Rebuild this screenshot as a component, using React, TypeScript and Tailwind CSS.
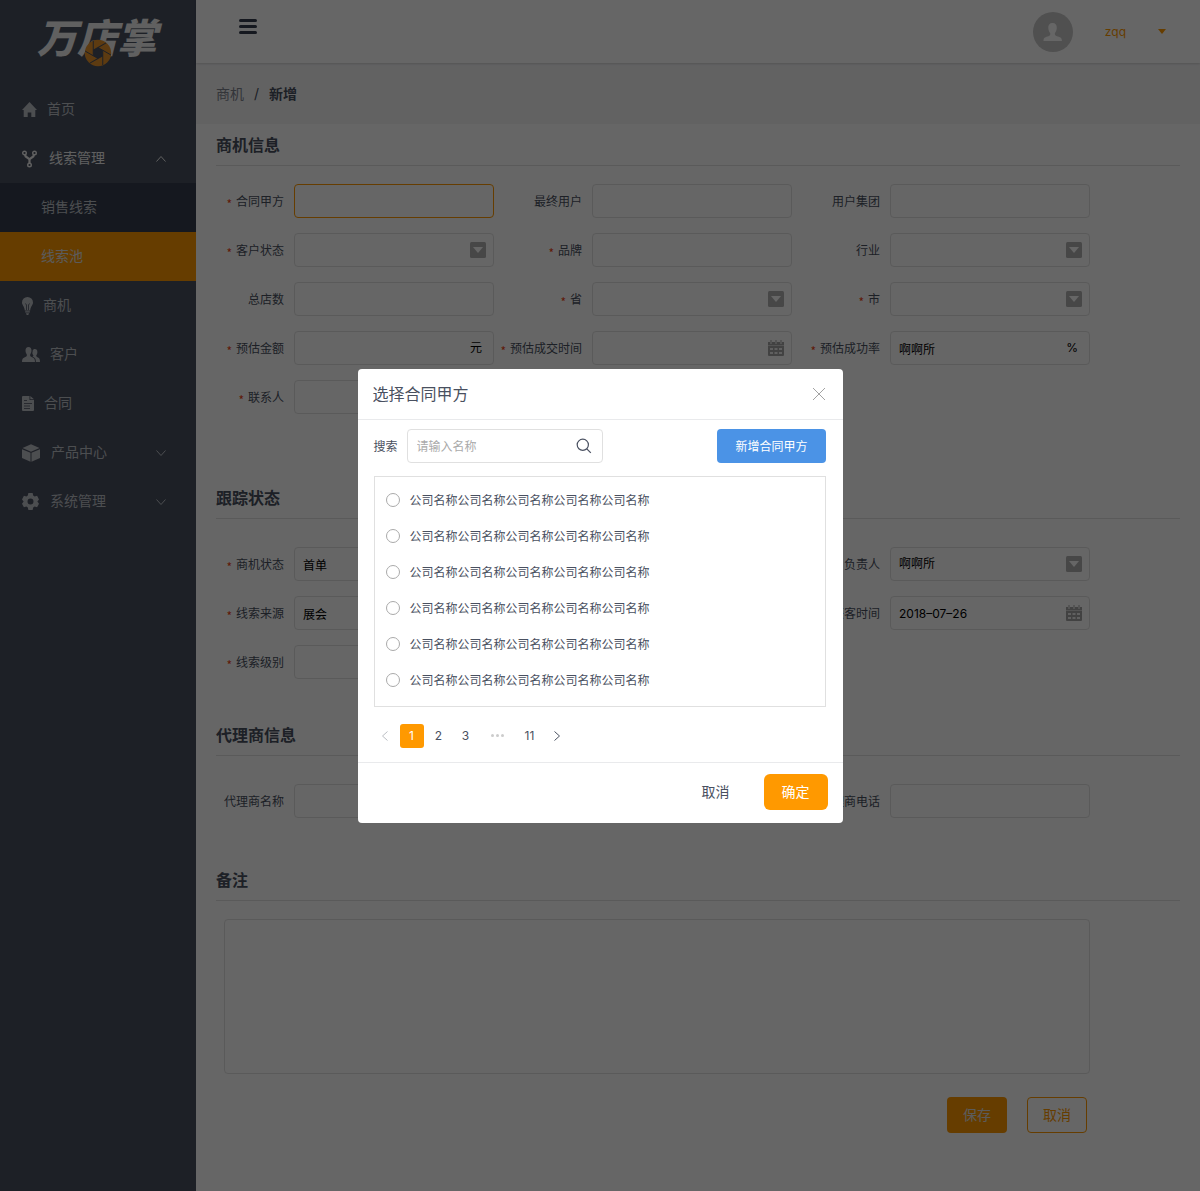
import React, { useId } from "react";

const Chevron = ({ d, className }: { d: string; className: string }) => (
  <svg viewBox="0 0 10 10" className={className} fill="none" stroke="currentColor">
    <path d={d} />
  </svg>
);
const UP = "M0.5 7.5 5 2.5 9.5 7.5";
const DOWN = "M0.5 2.5 5 7.5 9.5 2.5";
const LEFT = "M7.5 0.5 2.5 5 7.5 9.5";
const RIGHT = "M2.5 0.5 7.5 5 2.5 9.5";

const HomeIcon = () => (
  <svg viewBox="0 0 15 15" className="h-[15px] w-[15px]" fill="currentColor">
    <path d="M7.5 0 15 8h-1.700V15H9.300V10.500H5.700V15H1.700V8H0z" />
  </svg>
);
const ForkIcon = () => (
  <svg viewBox="0 0 15 18" className="h-[18px] w-[15px]" fill="none" stroke="currentColor">
    <circle cx="2.500" cy="3" r="1.800" strokeWidth="1.400" />
    <circle cx="12.500" cy="3" r="1.800" strokeWidth="1.400" />
    <circle cx="7.500" cy="15" r="1.800" strokeWidth="1.400" />
    <path d="M3 5c.500 3 4.500 2.500 4.500 5v3M12 5c-.500 3-4.500 2.500-4.500 5" strokeWidth="2.200" />
  </svg>
);
const BulbIcon = () => (
  <svg viewBox="0 0 11 18" className="h-[18px] w-[11px]">
    <path fill="currentColor" d="M5.500 0A5.500 5.500 0 0 0 0 5.500C0 8 2.500 9.500 2.800 13.500h5.400C8.500 9.500 11 8 11 5.500A5.500 5.500 0 0 0 5.500 0zM3.200 14.200h4.600v1.300H3.200zM4 16.200h3L6.300 18H4.700z" />
    <path d="M4.500 13V8L3.500 6.500M6.500 13V8l1-1.500" className="stroke-[#495060]" fill="none" strokeWidth=".8" />
  </svg>
);
const PeopleIcon = () => (
  <svg viewBox="0 0 18 15" className="h-[15px] w-[18px]" fill="currentColor">
    <path d="M6.500 0C8.500 0 9.600 1.500 9.500 3.800 9.400 5.800 8.700 6.800 8.200 7.500c-.3 1.500.3 2 2 2.700C12.300 11 13 12 13 15H0c0-3 .7-4 2.800-4.800 1.700-.7 2.300-1.200 2-2.700C4.300 6.800 3.600 5.800 3.500 3.800 3.400 1.500 4.500 0 6.500 0z" />
    <path d="M12.800 2c1.700 0 2.700 1.200 2.600 3.200-.1 1.600-.6 2.500-1.100 3.100-.2 1.200.3 1.700 1.600 2.200C17.500 11.200 18 12 18 15h-4.100c0-3-.8-4.300-3.400-5.400.9-.4 1-.7.8-1.300-.6-.7-.9-1.500-1-2.300.3-.7.4-1.500.4-2.500.4-1 1.100-1.500 2.100-1.500z" />
  </svg>
);
const DocIcon = () => (
  <svg viewBox="0 0 12 15" className="h-[15px] w-[12px]">
    <path fill="currentColor" d="M1 0h6.500v4H12v10a1 1 0 0 1-1 1H1a1 1 0 0 1-1-1V1a1 1 0 0 1 1-1zM8.300 0 12 3.300H8.300z" />
    <path className="stroke-[#495060]" strokeWidth=".8" d="M2 4.500h3M2 7.500h8M2 10h6M2 12.500h6" />
  </svg>
);
const BoxIcon = () => (
  <svg viewBox="0 0 18 18" className="h-[18px] w-[18px]" fill="currentColor">
    <path d="M9 .3 17.500 4 9 7.800.5 4zM0 5.200l8.500 3.600v8.900L0 14zM18 5.200 9.500 8.800v8.900L18 14z" />
  </svg>
);
const GearIcon = () => (
  <svg viewBox="0 0 24 24" className="h-[17px] w-[17px]" fill="currentColor">
    <path fillRule="evenodd" d="M9 0h6l.8 3.600 2 1.200L21.300 4l2.700 5-2.300 3 2.300 3-2.700 5-3.500-.8-2 1.200L15 24H9l-.8-3.600-2-1.200-3.500.8L0 15l2.300-3L0 9l2.700-5 3.500.8 2-1.200zM12 7.800a4.200 4.200 0 1 0 0 8.400 4.200 4.200 0 0 0 0-8.400z" />
  </svg>
);
const CalendarIcon = () => (
  <svg viewBox="0 0 16 16" className="h-4 w-4" aria-hidden="true">
    <path fill="#a6a6a6" d="M0 2h2v1.500h2V2h3v1.500h2V2h3v1.500h2V2h2v3H0zM2.500 0h1v3h-1zM7.500 0h1v3h-1zM12.500 0h1v3h-1zM0 5.500h16V15a1 1 0 0 1-1 1H1a1 1 0 0 1-1-1z" />
    <path fill="#f0f0f0" d="M2 8h3v2H2zM6.500 8h3v2h-3zM11 8h3v2h-3zM2 12h3v2H2zM6.500 12h3v2h-3zM11 12h3v2h-3z" />
  </svg>
);
const SelectIcon = () => (
  <svg viewBox="0 0 16 16" className="h-4 w-4" aria-hidden="true">
    <rect width="16" height="16" rx="1.500" fill="#b2b2b2" />
    <path d="M3 5h10l-5 6z" fill="#fff" />
  </svg>
);
const Aperture = () => (
  <svg viewBox="-14 -14 28 28" className="absolute left-[47px] top-[22px] h-7 w-7" aria-hidden="true">
    <circle r="13.200" fill="#e8942c" />
    <path fill="#495060" d="M0-5.500 4.760-2.750V2.750L0 5.500-4.760 2.750V-2.750z" />
    <g stroke="#495060" strokeWidth="1">
      <path d="M0-5.500 12.860 1.930" />
      <path d="M0-5.500 12.860 1.930" transform="rotate(60)" />
      <path d="M0-5.500 12.860 1.930" transform="rotate(120)" />
      <path d="M0-5.500 12.860 1.930" transform="rotate(180)" />
      <path d="M0-5.500 12.860 1.930" transform="rotate(240)" />
      <path d="M0-5.500 12.860 1.930" transform="rotate(300)" />
    </g>
  </svg>
);

type Item = { label: string; icon: React.ReactNode; gap: string; arrow?: string; open?: boolean };
const topItems: Item[] = [
  { label: "首页", icon: <HomeIcon />, gap: "gap-[10px]" },
  { label: "线索管理", icon: <ForkIcon />, gap: "gap-3", arrow: UP, open: true },
];
const bottomItems: Item[] = [
  { label: "商机", icon: <BulbIcon />, gap: "gap-[10px]" },
  { label: "客户", icon: <PeopleIcon />, gap: "gap-[10px]" },
  { label: "合同", icon: <DocIcon />, gap: "gap-[10px]" },
  { label: "产品中心", icon: <BoxIcon />, gap: "gap-[11px]", arrow: DOWN },
  { label: "系统管理", icon: <GearIcon />, gap: "gap-[11px]", arrow: DOWN },
];

const NavItem = ({ item }: { item: Item }) => (
  <a
    href="#"
    className={`flex h-[49px] items-center pl-[22px] pr-[30px] ${item.gap} ${item.open ? "text-[#f0f0f0]" : "text-[#bfc2c8]"}`}
  >
    {item.icon}
    <span className="flex-1 pb-[2px]">{item.label}</span>
    {item.arrow && <Chevron d={item.arrow} className="h-[10px] w-[10px]" />}
  </a>
);

const Sidebar = () => (
  <aside className="w-[196px] shrink-0 bg-[#495060] text-sm">
    <div className="h-[85px] pl-[37px] pt-[17px]">
      <div className="relative w-fit whitespace-nowrap text-[40px] font-black italic leading-[44px] text-[#f0f0f0]">
        万店掌
        <Aperture />
      </div>
    </div>
    <nav>
      {topItems.map((i) => (
        <NavItem key={i.label} item={i} />
      ))}
      <a href="#" className="flex h-[49px] items-center bg-[#363e4f] pb-[2px] pl-[41px] text-[#bfc2c8]">
        销售线索
      </a>
      <a href="#" className="flex h-[49px] items-center bg-[#ff9900] pb-[2px] pl-[41px] text-[#e4e4e4]">
        线索池
      </a>
      {bottomItems.map((i) => (
        <NavItem key={i.label} item={i} />
      ))}
    </nav>
  </aside>
);

type FieldProps = {
  label: string;
  required?: boolean;
  kind?: "text" | "select" | "date";
  value?: string;
  suffix?: string;
  active?: boolean;
  className?: string;
};

const Field = ({ label, required, kind = "text", value = "", suffix, active, className = "" }: FieldProps) => {
  const id = useId();
  const box = `h-[34px] w-full appearance-none rounded-[4px] border bg-white pl-2 pr-8 text-xs text-black outline-none ${
    active ? "border-[#ff9900]" : "border-[#e0e0e0]"
  }`;
  return (
    <div className={`flex items-center ${className}`}>
      <label htmlFor={id} className="flex w-[88px] shrink-0 items-center justify-end gap-1 whitespace-nowrap font-['Noto_Sans_CJK_SC',sans-serif] text-xs">
        {required && <span className="pt-[6px] text-[#ed3f14]">*</span>}
        {label}
      </label>
      <div className="relative ml-[10px] flex-1">
        {kind === "select" ? (
          <select id={id} className={box} defaultValue={value}>
            <option>{value}</option>
          </select>
        ) : (
          <input id={id} type="text" className={box} defaultValue={value} />
        )}
        <span className="pointer-events-none absolute inset-y-0 right-2 flex items-center text-xs text-black">
          {kind === "select" && <SelectIcon />}
          {kind === "date" && <CalendarIcon />}
          {suffix && <span className="pr-1">{suffix}</span>}
        </span>
      </div>
    </div>
  );
};

const Section = ({ title, children, className = "" }: { title: string; children: React.ReactNode; className?: string }) => (
  <section>
    <h2 className="mx-5 flex h-[42px] items-center border-b border-[#e0e0e0] text-base font-bold">{title}</h2>
    <div className={`pr-[110px] ${className}`}>{children}</div>
  </section>
);

const GRID = "grid grid-cols-3 gap-y-[15px]";

const Modal = () => (
  <div className="fixed inset-0 z-10 flex items-center justify-center bg-black/60">
    <div role="dialog" aria-label="选择合同甲方" className="w-[485px] rounded-[4px] bg-white">
      <header className="flex h-[51px] items-center justify-between border-b border-[#e9eaec] pl-[15px] pr-[18px]">
        <h3 className="text-base">选择合同甲方</h3>
        <button aria-label="关闭">
          <svg viewBox="0 0 12 12" className="h-3 w-3 stroke-[#999]">
            <path d="M0 0 12 12M12 0 0 12" strokeWidth=".9" />
          </svg>
        </button>
      </header>
      <div className="pb-[14px] pl-4 pr-[17px] pt-[9px]">
        <div className="flex items-center font-['Noto_Sans_CJK_SC',sans-serif] text-xs">
          <label htmlFor="search">搜索</label>
          <div className="relative ml-[9px] w-[196px]">
            <input
              id="search"
              placeholder="请输入名称"
              className="h-[34px] w-full rounded-[4px] border border-[#e0e0e0] pl-[9px] pr-8 outline-none placeholder:text-[#aaa]"
            />
            <svg viewBox="0 0 16 16" className="absolute right-[11px] top-[9px] h-4 w-4" fill="none" stroke="#495060" strokeWidth="1.200">
              <circle cx="6.800" cy="6.800" r="5.600" />
              <path d="m10.800 10.800 4 4" />
            </svg>
          </div>
          <button className="ml-auto h-[34px] rounded-[4px] bg-[#4b93e6] px-[18px] text-white">新增合同甲方</button>
        </div>
        <ul className="mt-[13px] flex flex-col gap-[18px] border border-[#e0e0e0] pb-[17px] pl-[11px] pt-[14px] font-['Noto_Sans_CJK_SC',sans-serif] text-xs">
          {[1, 2, 3, 4, 5, 6].map((n) => (
            <li key={n}>
              <label className="flex h-[18px] items-center gap-[10px]">
                <input type="radio" name="company" className="h-[14px] w-[14px] appearance-none rounded-full border border-[#aaa]" />
                公司名称公司名称公司名称公司名称公司名称
              </label>
            </li>
          ))}
        </ul>
        <nav className="mt-[17px] flex h-6 items-center text-xs">
          <button aria-label="上一页" className="flex w-[26px] justify-center pr-1 text-[#bbbec4]">
            <Chevron d={LEFT} className="h-[10px] w-[10px]" />
          </button>
          <button className="h-6 w-6 rounded-[3px] bg-[#ff9900] text-white">1</button>
          <button className="ml-[3px] h-6 w-6">2</button>
          <button className="ml-[3px] h-6 w-6">3</button>
          <button aria-label="更多" className="ml-[3px] flex w-[34px] justify-center gap-[2px]">
            <i className="h-[3px] w-[3px] rounded-full bg-[#ccc]" />
            <i className="h-[3px] w-[3px] rounded-full bg-[#ccc]" />
            <i className="h-[3px] w-[3px] rounded-full bg-[#ccc]" />
          </button>
          <button className="ml-[3px] h-6 w-6">11</button>
          <button aria-label="下一页" className="ml-[3px] flex w-6 justify-center">
            <Chevron d={RIGHT} className="h-[10px] w-[10px]" />
          </button>
        </nav>
      </div>
      <footer className="flex items-center justify-end gap-[16px] border-t border-[#e9eaec] pb-[13px] pr-[15px] pt-[11px] text-sm">
        <button className="h-9 px-[18px]">取消</button>
        <button className="h-9 rounded-[6px] bg-[#ff9900] px-[18px] text-white">确定</button>
      </footer>
    </div>
  </div>
);

export default function App() {
  return (
    <div className="flex min-h-screen bg-white font-[Inter,'Noto_Sans_CJK_SC',sans-serif] text-[#495060]">
      <Sidebar />
      <div className="min-w-0 flex-1">
        <header className="relative flex h-[63px] items-center pl-[43px] pr-[34px] shadow-[0_1px_2px_rgba(0,0,0,0.15)]">
          <button aria-label="菜单" className="mb-[11px] flex flex-col gap-[3px]">
            <i className="h-[3px] w-[18px] rounded-full bg-[#363e4f]" />
            <i className="h-[3px] w-[18px] rounded-full bg-[#363e4f]" />
            <i className="h-[3px] w-[18px] rounded-full bg-[#363e4f]" />
          </button>
          <svg viewBox="0 0 40 40" className="ml-auto h-10 w-10" aria-hidden="true">
            <circle cx="20" cy="20" r="20" fill="#c8c8c8" />
            <path fill="#fff" d="M19.500 11c3 0 4.500 2 4.300 5-.2 2.500-1 4-1.900 5-.4 2 .5 2.700 3 3.500 3 1 4 1.500 4 4.500H10.500c0-3 1-3.500 4-4.500 2.500-.8 3.100-1.500 2.700-3.500-1-1-1.700-2.500-1.900-5-.2-3 1.200-5 4.200-5z" />
          </svg>
          <button className="ml-8 flex items-center gap-8 text-xs text-[#ff9900]">
            zqq
            <svg viewBox="0 0 8 5" className="h-[5px] w-2" fill="currentColor">
              <path d="M0 0h8L4 5z" />
            </svg>
          </button>
        </header>
        <div className="flex h-[61px] items-center gap-[10px] bg-[#f5f5f6] pl-5 text-sm">
          <a href="#" className="text-[#80848f]">
            商机
          </a>
          <span>/</span>
          <span className="font-bold">新增</span>
        </div>
        <form>
          <Section title="商机信息" className={`${GRID} pb-[63px] pt-[18px]`}>
            <Field label="合同甲方" required active />
            <Field label="最终用户" />
            <Field label="用户集团" />
            <Field label="客户状态" required kind="select" />
            <Field label="品牌" required />
            <Field label="行业" kind="select" />
            <Field label="总店数" />
            <Field label="省" required kind="select" />
            <Field label="市" required kind="select" />
            <Field label="预估金额" required suffix="元" />
            <Field label="预估成交时间" required kind="date" />
            <Field label="预估成功率" required value="啊啊所" suffix="%" />
            <Field label="联系人" required />
          </Section>
          <Section title="跟踪状态" className={`${GRID} pb-[35px] pt-7`}>
            <Field label="商机状态" required value="首单" />
            <Field label="负责人" kind="select" value="啊啊所" className="col-start-3" />
            <Field label="线索来源" required value="展会" />
            <Field label="获客时间" kind="date" value="2018–07–26" className="col-start-3" />
            <Field label="线索级别" required />
          </Section>
          <Section title="代理商信息" className={`${GRID} pb-[41px] pt-7`}>
            <Field label="代理商名称" />
            <Field label="代理商电话" className="col-start-3" />
          </Section>
          <Section title="备注" className="pl-7 pt-[18px]">
            <textarea aria-label="备注" className="block h-[155px] w-full resize-none rounded-[4px] border border-[#e0e0e0] bg-white" />
            <div className="mt-[23px] flex justify-end gap-5 pr-[3px] text-sm">
              <button type="button" className="h-9 w-[60px] rounded-[4px] bg-[#ff9900] text-[#e4e4e4]">
                保存
              </button>
              <button type="button" className="h-9 w-[60px] rounded-[4px] border border-[#ff9900] text-[#ff9900]">
                取消
              </button>
            </div>
          </Section>
        </form>
      </div>
      <Modal />
    </div>
  );
}
